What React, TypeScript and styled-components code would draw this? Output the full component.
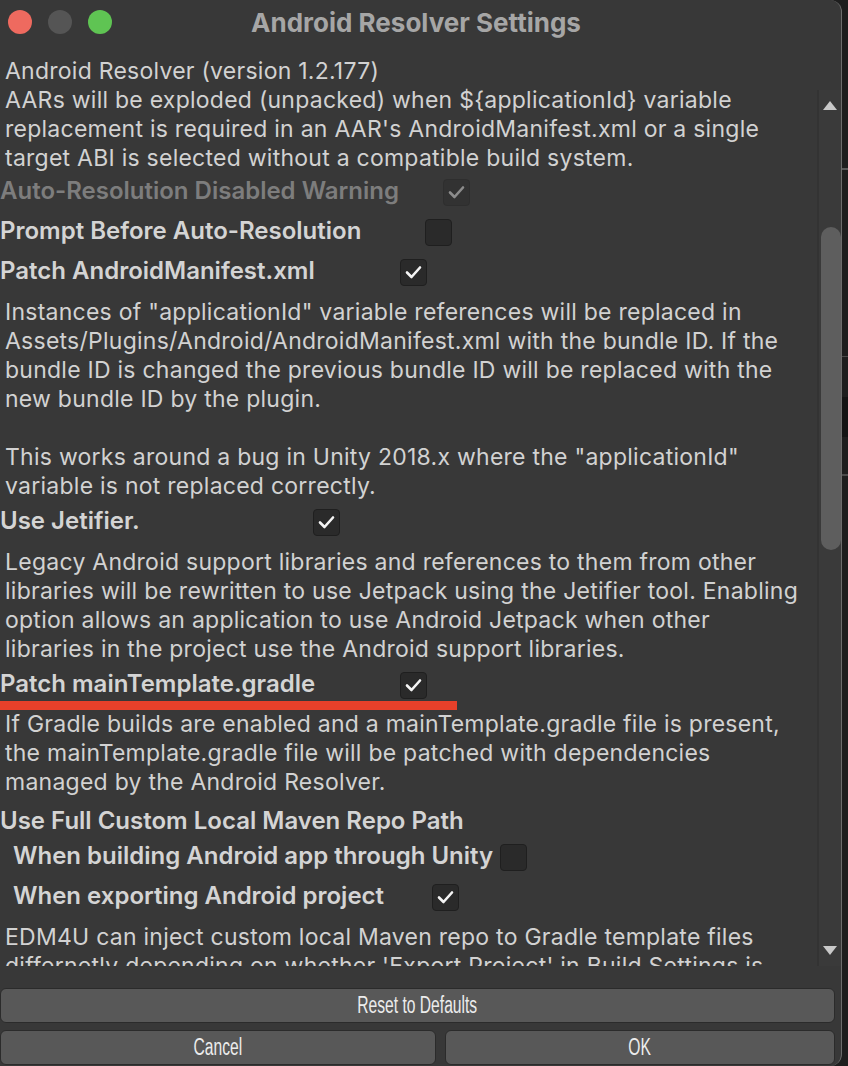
import React from "react";
import styled, { createGlobalStyle, css } from "styled-components";

const Global = createGlobalStyle`
  html, body { margin: 0; padding: 0; }
  body {
    width: 848px;
    height: 1066px;
    overflow: hidden;
    background:
      linear-gradient(to bottom,
        #1e1e1e 0, #1e1e1e 168px, #5a5a5a 168px, #5a5a5a 170px,
        #1e1e1e 170px, #1e1e1e 356px, #4a4a4a 356px, #4a4a4a 357px,
        #1e1e1e 357px, #1e1e1e 397px, #141414 397px, #141414 437px,
        #1e1e1e 437px, #1e1e1e 474px, #4a4a4a 474px, #4a4a4a 476px,
        #1e1e1e 476px);
    font-family: Inter, "Noto Sans", "DejaVu Sans", sans-serif;
  }
  #root { width: 848px; height: 1066px; }
`;

const Window = styled.div`
  width: 842px;
  height: 1066px;
  box-sizing: border-box;
  background: #383838;
  border-right: 1px solid #6c6c6c;
  border-radius: 0 12px 12px 0;
  display: flex;
  flex-direction: column;
  overflow: hidden;
`;

const TitleBar = styled.div`
  height: 44px;
  flex: none;
  display: grid;
  grid-template-columns: 1fr auto 1fr;
  align-items: center;
  padding-right: 9px;
`;

const Lights = styled.div`
  display: flex;
  gap: 16px;
  padding-left: 8px;
`;

const Light = styled.span<{ $c: string }>`
  width: 24px;
  height: 24px;
  border-radius: 50%;
  background: ${(p) => p.$c};
`;

const Title = styled.div`
  font-weight: 700;
  font-size: 26px;
  color: #a6a6a6;
`;

const Main = styled.div`
  height: 922px;
  flex: none;
  display: flex;
`;

const Content = styled.div`
  flex: 1;
  min-width: 0;
  overflow: hidden;
  padding-top: 12.5px;
  display: flex;
  flex-direction: column;
`;

const Para = styled.div`
  font-size: 23px;
  letter-spacing: 0.25px;
  line-height: 29px;
  color: #d2d2d2;
  padding-left: 5px;
  white-space: nowrap;
  margin-top: 12px;
  &:first-child { margin-top: 0; }
`;

const Row = styled.div<{ $label: number; $indent?: boolean; $gap?: number }>`
  display: grid;
  grid-template-columns: ${(p) => p.$label - (p.$indent ? 13 : 0)}px 27px;
  grid-template-rows: 27px;
  align-items: center;
  height: 27px;
  padding-left: ${(p) => (p.$indent ? 13 : 0)}px;
  margin-top: 13px;
  ${Para} + & { margin-top: 8px; }
  && { ${(p) => (p.$gap !== undefined ? `margin-top: ${p.$gap}px;` : "")} }
`;

const Label = styled.span<{ $disabled?: boolean }>`
  font-size: 24px;
  font-weight: 600;
  line-height: 23px;
  padding-bottom: 4px;
  white-space: nowrap;
  color: ${(p) => (p.$disabled ? "#7d7d7d" : "#d4d4d4")};
`;

const Box = styled.span<{ $disabled?: boolean }>`
  width: 27px;
  height: 27px;
  box-sizing: border-box;
  border-radius: 4px;
  border: 1px solid ${(p) => (p.$disabled ? "#2e2e2e" : "#1f1f1f")};
  background: ${(p) => (p.$disabled ? "#323232" : "#2a2a2a")};
  display: flex;
  align-items: center;
  justify-content: center;
`;

const Underline = styled.div`
  width: 457px;
  height: 9px;
  margin-top: 2px;
  background: #e8402a;
  flex: none;
  & + ${Para} { margin-top: 0.5px; }
`;

const ScrollBar = styled.div`
  width: 24px;
  flex: none;
  margin-top: 46px;
  box-sizing: border-box;
  border-left: 2px solid #333333;
  background: #3a3a3a;
  display: flex;
  flex-direction: column;
  align-items: center;
  padding: 11px 0 11px;
`;

const Arrow = styled.span<{ $down?: boolean }>`
  width: 0;
  height: 0;
  border-left: 7px solid transparent;
  border-right: 7px solid transparent;
  ${(p) =>
    p.$down
      ? css`border-top: 9px solid #c9c9c9; margin-top: auto;`
      : css`border-bottom: 9px solid #c9c9c9;`}
`;

const Thumb = styled.span`
  width: 20px;
  height: 323px;
  margin-top: 117px;
  margin-left: 2px;
  border-radius: 10px;
  background: #5e5e5e;
`;

const Footer = styled.div`
  flex: 1;
  padding: 22px 6px 0 0;
  display: flex;
  flex-direction: column;
  gap: 7px;
`;

const ButtonRow = styled.div`
  display: grid;
  grid-template-columns: 436px 1fr;
  gap: 9px;
`;

const Button = styled.button`
  height: 35px;
  box-sizing: border-box;
  border: 1px solid #2b2b2b;
  border-radius: 6px;
  background: #585858;
  color: #ececec;
  padding: 0;
  display: flex;
  align-items: center;
  justify-content: center;
  font-family: "Liberation Sans", Arial, sans-serif;
  font-size: 23px;
`;

const BtnText = styled.span`
  display: inline-block;
  transform: scaleX(0.68);
`;

const Check = ({ color }: { color: string }) => (
  <svg width="17" height="14" viewBox="0 0 17 14">
    <polyline
      points="2,7.5 6.5,12 15,2.5"
      fill="none"
      stroke={color}
      strokeWidth="2.6"
      strokeLinecap="round"
      strokeLinejoin="round"
    />
  </svg>
);

const Checkbox = ({ checked, disabled }: { checked?: boolean; disabled?: boolean }) => (
  <Box $disabled={disabled}>{checked && <Check color={disabled ? "#8c8c8c" : "#f4f4f4"} />}</Box>
);

const Lines = ({ lines }: { lines: string[] }) => (
  <Para>
    {lines.map((l, i) => (
      <React.Fragment key={i}>
        {l === "" ? "\u00a0" : l}
        {i < lines.length - 1 && <br />}
      </React.Fragment>
    ))}
  </Para>
);

export default function App() {
  return (
    <>
      <Global />
      <Window>
        <TitleBar>
          <Lights>
            <Light $c="#ee6a5f" />
            <Light $c="#555555" />
            <Light $c="#5fc453" />
          </Lights>
          <Title>Android Resolver Settings</Title>
          <span />
        </TitleBar>
        <Main>
          <Content>
            <Lines
              lines={[
                "Android Resolver (version 1.2.177)",
                "AARs will be exploded (unpacked) when ${applicationId} variable",
                "replacement is required in an AAR's AndroidManifest.xml or a single",
                "target ABI is selected without a compatible build system.",
              ]}
            />
            <Row $label={443} $gap={6}>
              <Label $disabled>Auto-Resolution Disabled Warning</Label>
              <Checkbox checked disabled />
            </Row>
            <Row $label={425}>
              <Label>Prompt Before Auto-Resolution</Label>
              <Checkbox />
            </Row>
            <Row $label={400}>
              <Label>Patch AndroidManifest.xml</Label>
              <Checkbox checked />
            </Row>
            <Lines
              lines={[
                "Instances of \"applicationId\" variable references will be replaced in",
                "Assets/Plugins/Android/AndroidManifest.xml with the bundle ID.  If the",
                "bundle ID is changed the previous bundle ID will be replaced with the",
                "new bundle ID by the plugin.",
                "",
                "This works around a bug in Unity 2018.x where the \"applicationId\"",
                "variable is not replaced correctly.",
              ]}
            />
            <Row $label={313}>
              <Label>Use Jetifier.</Label>
              <Checkbox checked />
            </Row>
            <Lines
              lines={[
                "Legacy Android support libraries and references to them from other",
                "libraries will be rewritten to use Jetpack using the Jetifier tool. Enabling",
                "option allows an application to use Android Jetpack when other",
                "libraries in the project use the Android support libraries.",
              ]}
            />
            <Row $label={400}>
              <Label>Patch mainTemplate.gradle</Label>
              <Checkbox checked />
            </Row>
            <Underline />
            <Lines
              lines={[
                "If Gradle builds are enabled and a mainTemplate.gradle file is present,",
                "the mainTemplate.gradle file will be patched with dependencies",
                "managed by the Android Resolver.",
              ]}
            />
            <Row $label={500} $gap={12}>
              <Label>Use Full Custom Local Maven Repo Path</Label>
            </Row>
            <Row $label={500} $indent $gap={7.5}>
              <Label>When building Android app through Unity</Label>
              <Checkbox />
            </Row>
            <Row $label={432} $indent>
              <Label>When exporting Android project</Label>
              <Checkbox checked />
            </Row>
            <Lines
              lines={[
                "EDM4U can inject custom local Maven repo to Gradle template files",
                "differnetly depending on whether 'Export Project' in Build Settings is",
              ]}
            />
          </Content>
          <ScrollBar>
            <Arrow />
            <Thumb />
            <Arrow $down />
          </ScrollBar>
        </Main>
        <Footer>
          <Button>
            <BtnText>Reset to Defaults</BtnText>
          </Button>
          <ButtonRow>
            <Button>
              <BtnText>Cancel</BtnText>
            </Button>
            <Button>
              <BtnText>OK</BtnText>
            </Button>
          </ButtonRow>
        </Footer>
      </Window>
    </>
  );
}
